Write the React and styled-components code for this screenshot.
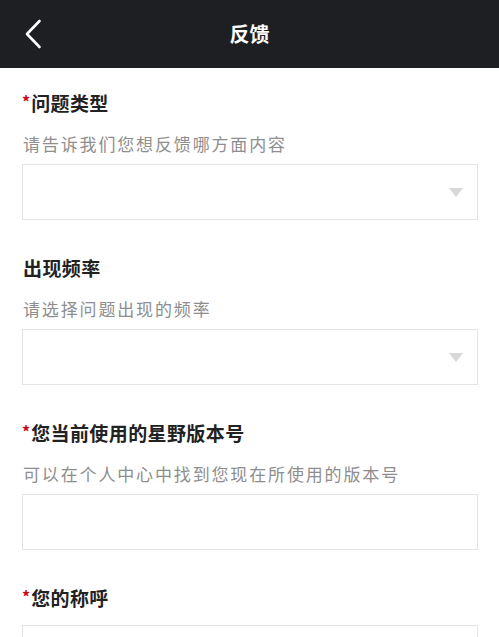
import React from 'react';
import styled, { createGlobalStyle } from 'styled-components';

const GlobalStyle = createGlobalStyle`
  html, body {
    margin: 0;
    padding: 0;
    background: #ffffff;
    font-family: "Noto Sans CJK SC", "Noto Sans", sans-serif;
  }
  * {
    box-sizing: border-box;
  }
`;

const Page = styled.div`
  width: 100%;
  min-height: 100vh;
  background: #ffffff;
  overflow: hidden;
`;

const NavBar = styled.header`
  height: 68px;
  background-color: #1e1f23;
  display: grid;
  grid-template-columns: 80px 1fr 80px;
  align-items: center;
`;

const BackButton = styled.button`
  border: none;
  background: transparent;
  padding: 0 0 0 24px;
  height: 100%;
  display: flex;
  align-items: center;
  cursor: pointer;
`;

const NavTitle = styled.h1`
  margin: 0;
  text-align: center;
  color: #ffffff;
  font-size: 20px;
  font-weight: 700;
  line-height: 1;
`;

const Form = styled.form`
  display: flex;
  flex-direction: column;
  padding: 21px 21px 0 22px;
  gap: 34px;
`;

const Field = styled.section`
  display: flex;
  flex-direction: column;
`;

const Label = styled.label`
  display: block;
  height: 28px;
  font-size: 19px;
  font-weight: 700;
  color: #222222;
  line-height: 28px;
  letter-spacing: 0.4px;
  margin-left: ${(p) => (p.required ? '0' : '1px')};
`;

const Star = styled.span`
  color: #d0021b;
  font-size: 16px;
  line-height: 0;
  vertical-align: 3px;
  margin-right: 1px;
  letter-spacing: 0;
`;

const Hint = styled.p`
  margin: 15px 0 0 1px;
  font-size: 17px;
  line-height: 24px;
  color: #8e8e8e;
  letter-spacing: 1.85px;
`;

const Box = styled.div`
  position: relative;
  margin-top: ${(p) => (p.hasHint ? '8px' : '13px')};
  height: 56px;
  border: 1.5px solid #e4e4e4;
  background: #ffffff;
`;

const Caret = styled.span`
  position: absolute;
  right: 14px;
  top: 23px;
  width: 0;
  height: 0;
  border-left: 7.5px solid transparent;
  border-right: 7.5px solid transparent;
  border-top: 9px solid #d8d8d8;
`;

const TextInput = styled.input`
  width: 100%;
  height: 100%;
  border: none;
  outline: none;
  padding: 0 12px;
  font-size: 17px;
  font-family: inherit;
  background: transparent;
`;

const fields = [
  { label: '问题类型', hint: '请告诉我们您想反馈哪方面内容', required: true, select: true },
  { label: '出现频率', hint: '请选择问题出现的频率', required: false, select: true },
  { label: '您当前使用的星野版本号', hint: '可以在个人中心中找到您现在所使用的版本号', required: true, select: false },
  { label: '您的称呼', hint: null, required: true, select: false },
];

const BackIcon = () => (
  <svg width="18" height="30" viewBox="0 0 18 30" fill="none">
    <path d="M15.5 2 L3 15 L15.5 28" stroke="#ffffff" strokeWidth="2.6" strokeLinecap="round" strokeLinejoin="round" />
  </svg>
);

const App = () => (
  <Page>
    <GlobalStyle />
    <NavBar>
      <BackButton type="button" aria-label="返回">
        <BackIcon />
      </BackButton>
      <NavTitle>反馈</NavTitle>
      <span />
    </NavBar>

    <Form onSubmit={(e) => e.preventDefault()}>
      {fields.map((f) => (
        <Field key={f.label}>
          <Label required={f.required}>
            {f.required && <Star>*</Star>}
            {f.label}
          </Label>
          {f.hint && <Hint>{f.hint}</Hint>}
          <Box hasHint={!!f.hint}>
            {f.select ? <Caret /> : <TextInput type="text" />}
          </Box>
        </Field>
      ))}
    </Form>
  </Page>
);

export default App;
